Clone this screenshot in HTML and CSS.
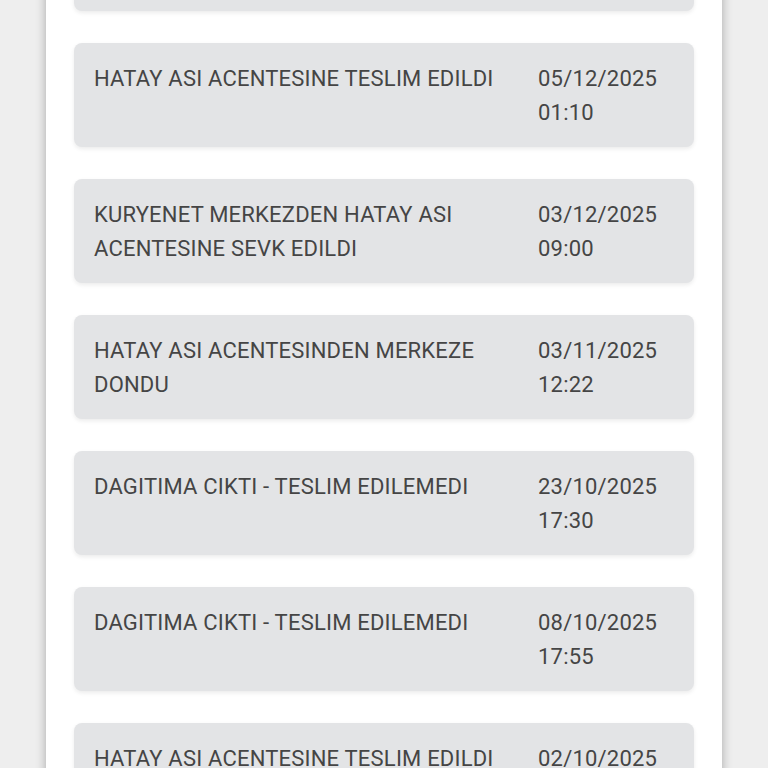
FILE: index.html
```html
<!DOCTYPE html>
<html lang="tr">
<head>
    <meta charset="UTF-8">
    <meta name="viewport" content="width=device-width, initial-scale=1.0">
    <title>Kargo Takip</title>
    <link rel="stylesheet" href="styles.css">
</head>
<body>
    <div class="panel">
        <div class="moves">
            <!-- previous entry, scrolled above the view -->
            <div class="move" aria-hidden="true"></div>
            <div class="move">
                <div class="move-text">HATAY ASI ACENTESINE TESLIM EDILDI</div>
                <div class="move-date">05/12/2025<br>01:10</div>
            </div>
            <div class="move">
                <div class="move-text">KURYENET MERKEZDEN HATAY ASI ACENTESINE SEVK EDILDI</div>
                <div class="move-date">03/12/2025<br>09:00</div>
            </div>
            <div class="move">
                <div class="move-text">HATAY ASI ACENTESINDEN MERKEZE DONDU</div>
                <div class="move-date">03/11/2025<br>12:22</div>
            </div>
            <div class="move">
                <div class="move-text">DAGITIMA CIKTI - TESLIM EDILEMEDI</div>
                <div class="move-date">23/10/2025<br>17:30</div>
            </div>
            <div class="move">
                <div class="move-text">DAGITIMA CIKTI - TESLIM EDILEMEDI</div>
                <div class="move-date">08/10/2025<br>17:55</div>
            </div>
            <div class="move">
                <div class="move-text">HATAY ASI ACENTESINE TESLIM EDILDI</div>
                <div class="move-date">02/10/2025<br>10:15</div>
            </div>
        </div>
    </div>
</body>
</html>
```

FILE: styles.css
```css
html, body {
    height: 100%;
}
body {
    font-family: Roboto, "Liberation Sans", sans-serif;
    margin: 0;
    background-color: #eeeeee;
    overflow: hidden;
}
.panel {
    width: 676px;
    min-height: 100%;
    margin: -93px auto 0;
    padding: 0 28px;
    box-sizing: border-box;
    background: #fff;
    box-shadow: 0 0 10px rgba(0, 0, 0, 0.3);
}
.moves {
    display: flex;
    flex-direction: column;
    gap: 32px;
}
.move {
    display: grid;
    grid-template-columns: 1fr 136px;
    gap: 24px;
    height: 104px;
    box-sizing: border-box;
    padding: 19px 20px 17px;
    background: #e3e4e6;
    border-radius: 8px;
    box-shadow: 0 2px 4px rgba(0, 0, 0, 0.08);
    color: #454545;
    font-size: 22px;
    line-height: 34px;
    letter-spacing: 0.2px;
}
```
